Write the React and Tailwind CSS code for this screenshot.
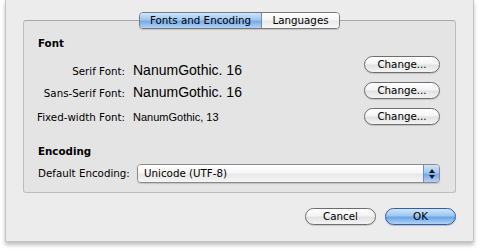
export default function App() {
  const font = { fontFamily: '"DejaVu Sans", "Liberation Sans", sans-serif' };
  const Pill = ({ children, w }) => (
    <div
      className={`flex h-[17px] items-center justify-center rounded-full border border-[#6e6e6e] bg-[linear-gradient(#ffffff,#f4f4f4_45%,#e2e2e2_55%,#f3f3f3)] text-[10.3px] text-black shadow-[0_1px_1px_rgba(0,0,0,0.15)] ${w}`}
    >
      {children}
    </div>
  );
  const rows = [
    ["Serif Font:", "NanumGothic. 16", true, "mt-[7px]"],
    ["Sans-Serif Font:", "NanumGothic. 16", true, "mt-[3px]"],
    ["Fixed-width Font:", "NanumGothic, 13", false, "mt-[2px]"],
  ];
  return (
    <div className="h-[250px] w-[480px] bg-white" style={font}>
      <div className="ml-[5px] flex h-[242px] w-[469px] flex-col border-x border-b border-[#c4c4c4] bg-[#ececec] px-[17px] pt-[12px] shadow-[0_3px_4px_rgba(0,0,0,0.25)]">
        <div className="relative z-10 flex justify-center">
          <div className="flex h-[17px] overflow-hidden rounded-[4px] border border-[#7a7a7a] text-[10.3px] shadow-[0_1px_1px_rgba(0,0,0,0.15)]">
            <div className="flex w-[122px] items-center justify-center border-r border-[#6d8fbd] bg-[linear-gradient(#cfe4fa,#9fc7f1_45%,#74abe9_55%,#b0d4f7)] text-black">
              Fonts and Encoding
            </div>
            <div className="flex w-[77px] items-center justify-center bg-[linear-gradient(#ffffff,#f6f6f6_45%,#e9e9e9_55%,#f7f7f7)] text-black">
              Languages
            </div>
          </div>
        </div>
        <div className="-mt-[9px] h-[173px] rounded-[3px] border border-[#bdbdbd] border-t-[#a9a9a9] bg-[#e4e4e4] pl-[10px] pr-[15px] pt-[16px]">
          <div className="pl-[4px] text-[10.3px] font-bold leading-[13px] text-black">Font</div>
          <div className="mt-[6px] flex flex-col gap-[9px]">
            {rows.map(([l, v, big, off]) => (
              <div key={l} className="flex h-[17px] items-start justify-between">
                <div className={`flex items-baseline whitespace-nowrap ${off}`}>
                  <span className="w-[91px] text-right text-[10.3px] text-black">{l}</span>
                  <span
                    className={`ml-[8px] text-black ${big ? "text-[14px] leading-[14px]" : "text-[11px] leading-[13px]"}`}
                    style={{ fontFamily: '"Liberation Sans", sans-serif' }}
                  >
                    {v}
                  </span>
                </div>
                <Pill w="w-[76px]">Change...</Pill>
              </div>
            ))}
          </div>
          <div className="mt-[20px] pl-[4px] text-[10.3px] font-bold leading-[13px] text-black">Encoding</div>
          <div className="mt-[6px] flex h-[19px] items-center pl-[4px]">
            <span className="w-[99px] whitespace-nowrap text-[10.3px] text-black">Default Encoding:</span>
            <div className="flex h-[19px] flex-1 overflow-hidden rounded-[4px] border border-[#8a8a8a] shadow-[0_1px_1px_rgba(0,0,0,0.15)]">
              <div className="flex flex-1 items-center bg-[linear-gradient(#ffffff,#f6f6f6_45%,#e8e8e8_55%,#f5f5f5)] pl-[6px] text-[10.3px] text-black">
                Unicode (UTF-8)
              </div>
              <div className="flex w-[16px] flex-col items-center justify-center gap-[2px] border-l border-[#6d8fbd] bg-[linear-gradient(#cfe4fa,#9fc7f1_45%,#74abe9_55%,#b0d4f7)]">
                <svg width="6" height="4" viewBox="0 0 6 4"><path d="M3 0L6 4H0z" fill="#1a1a1a" /></svg>
                <svg width="6" height="4" viewBox="0 0 6 4"><path d="M0 0H6L3 4z" fill="#1a1a1a" /></svg>
              </div>
            </div>
          </div>
        </div>
        <div className="mt-[15px] flex justify-end gap-[9px]">
          <Pill w="w-[71px]">Cancel</Pill>
          <div className="flex h-[17px] w-[71px] items-center justify-center rounded-full border border-[#2f5fa8] bg-[linear-gradient(#cfe4fa,#9fc7f1_45%,#6aa4e8_55%,#b0d4f7)] text-[10.3px] text-black shadow-[0_1px_1px_rgba(0,0,0,0.2)]">
            OK
          </div>
        </div>
      </div>
    </div>
  );
}
